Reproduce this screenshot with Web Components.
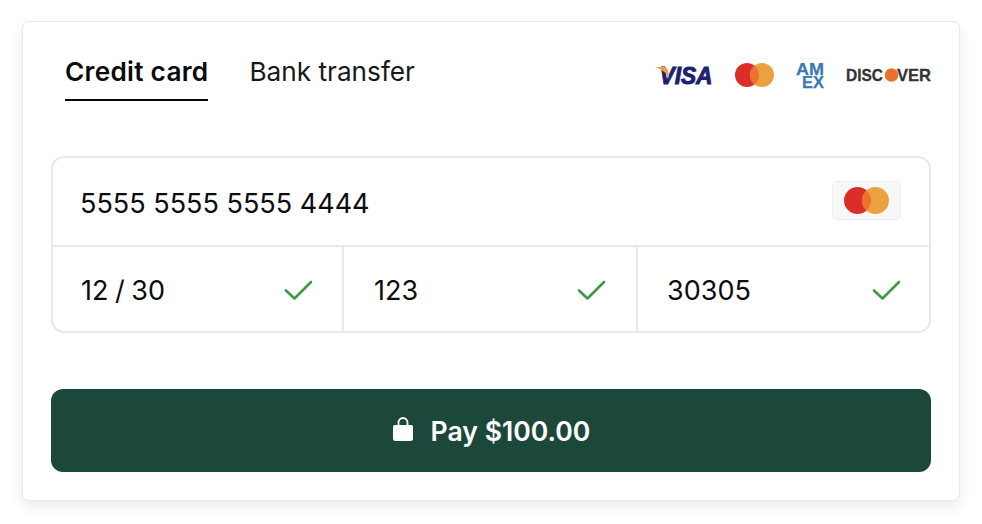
<!DOCTYPE html>
<html>
<head>
<meta charset="utf-8">
<title>Payment</title>
<style>
  html, body { margin: 0; background: #fff; }
  body { padding: 21px 22px; font-family: Inter, "Liberation Sans", sans-serif; color: #0c0c0e; }
</style>
</head>
<body>
<pay-card>
  <pay-tabs slot="head">
    <pay-tab active>Credit card</pay-tab>
    <pay-tab>Bank transfer</pay-tab>
  </pay-tabs>
  <card-logos slot="head"></card-logos>
  <card-fields slot="fields">
    <card-field slot="number" value="5555 5555 5555 4444" kind="brand" style="--pad-left: 27px; --pad-right: 28px"></card-field>
    <card-field slot="row" value="12 / 30" kind="ok" style="--word-gap: -1px"></card-field>
    <card-field slot="row" value="123" kind="ok" style="--pad-left: 30px; --pad-right: 30px"></card-field>
    <card-field slot="row" value="30305" kind="ok" style="--pad-left: 29px; --pad-right: 28px"></card-field>
  </card-fields>
  <pay-button slot="action">Pay $100.00</pay-button>
</pay-card>

<script>
  const MASTERCARD = `
    <svg width="45" height="27" viewBox="0 0 45 27" aria-hidden="true">
      <circle cx="13.5" cy="13.5" r="13.5" fill="#dc2e28"/>
      <circle cx="31.5" cy="13.5" r="13.5" fill="#eba13f"/>
      <path d="M22.5 3.44a13.5 13.5 0 0 1 0 20.12a13.5 13.5 0 0 1 0-20.12z" fill="#f0702e"/>
    </svg>`;

  class PayCard extends HTMLElement {
    constructor() {
      super();
      this.attachShadow({ mode: "open" });
      this.shadowRoot.innerHTML = `
        <style>
          :host {
            display: block;
            box-sizing: border-box;
            width: 938px;
            height: 480px;
            padding: 0 28px;
            background: #fff;
            border: 1.5px solid #e7e7ec;
            border-radius: 7px;
            box-shadow: 0 6px 14px rgba(30, 30, 50, .09);
          }
          .head { display: flex; justify-content: space-between; align-items: flex-start; height: 134px; }
          .fields { height: 177px; }
          .action { margin-top: 56px; }
        </style>
        <div class="head"><slot name="head"></slot></div>
        <div class="fields"><slot name="fields"></slot></div>
        <div class="action"><slot name="action"></slot></div>
      `;
    }
  }

  class PayTabs extends HTMLElement {
    constructor() {
      super();
      this.attachShadow({ mode: "open" });
      this.shadowRoot.innerHTML = `
        <style>
          :host { display: flex; gap: 41px; padding: 30px 0 0 14px; }
        </style>
        <slot></slot>
      `;
    }
  }

  class PayTab extends HTMLElement {
    constructor() {
      super();
      this.attachShadow({ mode: "open" });
      this.shadowRoot.innerHTML = `
        <style>
          :host {
            display: block;
            height: 49px;
            font-size: 26.2px;
            line-height: 40px;
            font-weight: 400;
            color: #17171a;
            box-sizing: border-box;
            white-space: nowrap;
          }
          :host([active]) {
            font-weight: 600;
            letter-spacing: .28px;
            color: #0a0a0c;
            border-bottom: 2px solid #0a0a0c;
          }
        </style>
        <slot></slot>
      `;
    }
  }

  class CardLogos extends HTMLElement {
    constructor() {
      super();
      this.attachShadow({ mode: "open" });
      this.shadowRoot.innerHTML = `
        <style>
          :host { display: flex; align-items: center; padding-top: 37px; height: 32px; }
          svg { display: block; flex: none; overflow: visible; }
          text { font-family: "Liberation Sans", Arial, sans-serif; font-weight: 700; }
          .mc { margin-left: 22px; }
          .amex { margin-left: 22px; }
          .disc { margin-left: 22px; }
        </style>
        <svg class="visa" width="58" height="24" viewBox="0 0 58 24" aria-hidden="true">
          <text x="4.5" y="21" font-size="24" font-style="italic" fill="#1b2270" stroke="#1b2270" stroke-width="1" textLength="53" lengthAdjust="spacingAndGlyphs">VISA</text>
          <path d="M0 4 H10 Q12 4 12.6 6.5 L14.5 16 Q10 7 0 4z" fill="#e8a33c"/>
        </svg>
        <svg class="mc" width="39" height="24" viewBox="0 0 39 24" aria-hidden="true">
          <circle cx="12" cy="12" r="12" fill="#dc2e28"/>
          <circle cx="27" cy="12" r="12" fill="#eba13f"/>
          <path d="M19.5 2.63a12 12 0 0 1 0 18.74a12 12 0 0 1 0-18.74z" fill="#f0702e"/>
        </svg>
        <svg class="amex" width="28" height="26" viewBox="0 0 28 26" aria-hidden="true">
          <text x="0" y="13" font-size="16.5" fill="#3a78b5" stroke="#3a78b5" stroke-width=".25" textLength="28" lengthAdjust="spacingAndGlyphs">AM</text>
          <text x="6" y="25.5" font-size="16.5" fill="#3a78b5" stroke="#3a78b5" stroke-width=".25" textLength="22" lengthAdjust="spacingAndGlyphs">EX</text>
        </svg>
        <svg class="disc" width="85" height="20" viewBox="0 0 85 20" aria-hidden="true">
          <text x="0" y="16" font-size="17" fill="#333337" stroke="#333337" stroke-width=".3" textLength="37" lengthAdjust="spacingAndGlyphs">DISC</text>
          <circle cx="45.5" cy="10" r="6.8" fill="#e8702d"/>
          <text x="51" y="16" font-size="17" fill="#333337" stroke="#333337" stroke-width=".3" textLength="34" lengthAdjust="spacingAndGlyphs">VER</text>
        </svg>
      `;
    }
  }

  class CardFields extends HTMLElement {
    constructor() {
      super();
      this.attachShadow({ mode: "open" });
      this.shadowRoot.innerHTML = `
        <style>
          :host {
            display: grid;
            grid-template-rows: 87px 1fr;
            box-sizing: border-box;
            height: 177px;
            border: 2px solid #e8e8ed;
            border-radius: 13px;
          }
          .row {
            display: grid;
            grid-template-columns: 291px 294px 1fr;
            border-top: 2px solid #e8e8ed;
          }
          ::slotted([slot="row"]:not(:last-child)) { border-right: 2px solid #e8e8ed; }
          ::slotted([slot="number"]) { padding-top: 3px; }
          ::slotted([slot="row"]) { padding-top: 2px; }
        </style>
        <slot name="number"></slot>
        <div class="row"><slot name="row"></slot></div>
      `;
    }
  }

  class CardField extends HTMLElement {
    constructor() {
      super();
      this.attachShadow({ mode: "open" });
      const icon = this.getAttribute("kind") === "brand"
        ? `<span class="brand">${MASTERCARD}</span>`
        : `<svg class="ok" width="29" height="22" viewBox="0 0 29 22" aria-hidden="true"><path d="M2 11.5 L10.5 19.5 L27 3" fill="none" stroke="#3e9a47" stroke-width="2.6" stroke-linecap="round" stroke-linejoin="round"/></svg>`;
      this.shadowRoot.innerHTML = `
        <style>
          :host {
            display: flex;
            align-items: center;
            justify-content: space-between;
            box-sizing: border-box;
            padding: 0 var(--pad-right, 29px) 0 var(--pad-left, 28px);
            min-width: 0;
            font-size: 27px;
            color: #0c0c0e;
          }
          .value { word-spacing: var(--word-gap, 0); }
          .brand {
            display: flex;
            align-items: center;
            justify-content: center;
            box-sizing: border-box;
            width: 69px;
            height: 39px;
            margin-top: -5px;
            background: #f7f7f8;
            border: 1.5px solid #eeeef1;
            border-radius: 5px;
          }
          svg { display: block; }
        </style>
        <span class="value">${this.getAttribute("value")}</span>
        ${icon}
      `;
    }
  }

  class PayButton extends HTMLElement {
    constructor() {
      super();
      this.attachShadow({ mode: "open" });
      this.shadowRoot.innerHTML = `
        <style>
          :host {
            display: flex;
            align-items: center;
            justify-content: center;
            gap: 17px;
            height: 83px;
            background: #1c483c;
            border-radius: 12px;
            color: #fff;
            font-size: 26.6px;
            font-weight: 600;
          }
          svg { display: block; margin-top: -4px; }
        </style>
        <svg width="22" height="25" viewBox="0 0 22 25" aria-hidden="true">
          <path d="M6.5 9 V6.5 a4.5 4.5 0 0 1 9 0 V9" fill="none" stroke="#fff" stroke-width="1.8"/>
          <path d="M2.5 9 H19.5 Q21 9 21 10.5 V22.5 Q21 25 18.5 25 H3.5 Q1 25 1 22.5 V10.5 Q1 9 2.5 9z" fill="#fff"/>
        </svg>
        <span><slot></slot></span>
      `;
    }
  }

  customElements.define("pay-card", PayCard);
  customElements.define("pay-tabs", PayTabs);
  customElements.define("pay-tab", PayTab);
  customElements.define("card-logos", CardLogos);
  customElements.define("card-fields", CardFields);
  customElements.define("card-field", CardField);
  customElements.define("pay-button", PayButton);
</script>
</body>
</html>
